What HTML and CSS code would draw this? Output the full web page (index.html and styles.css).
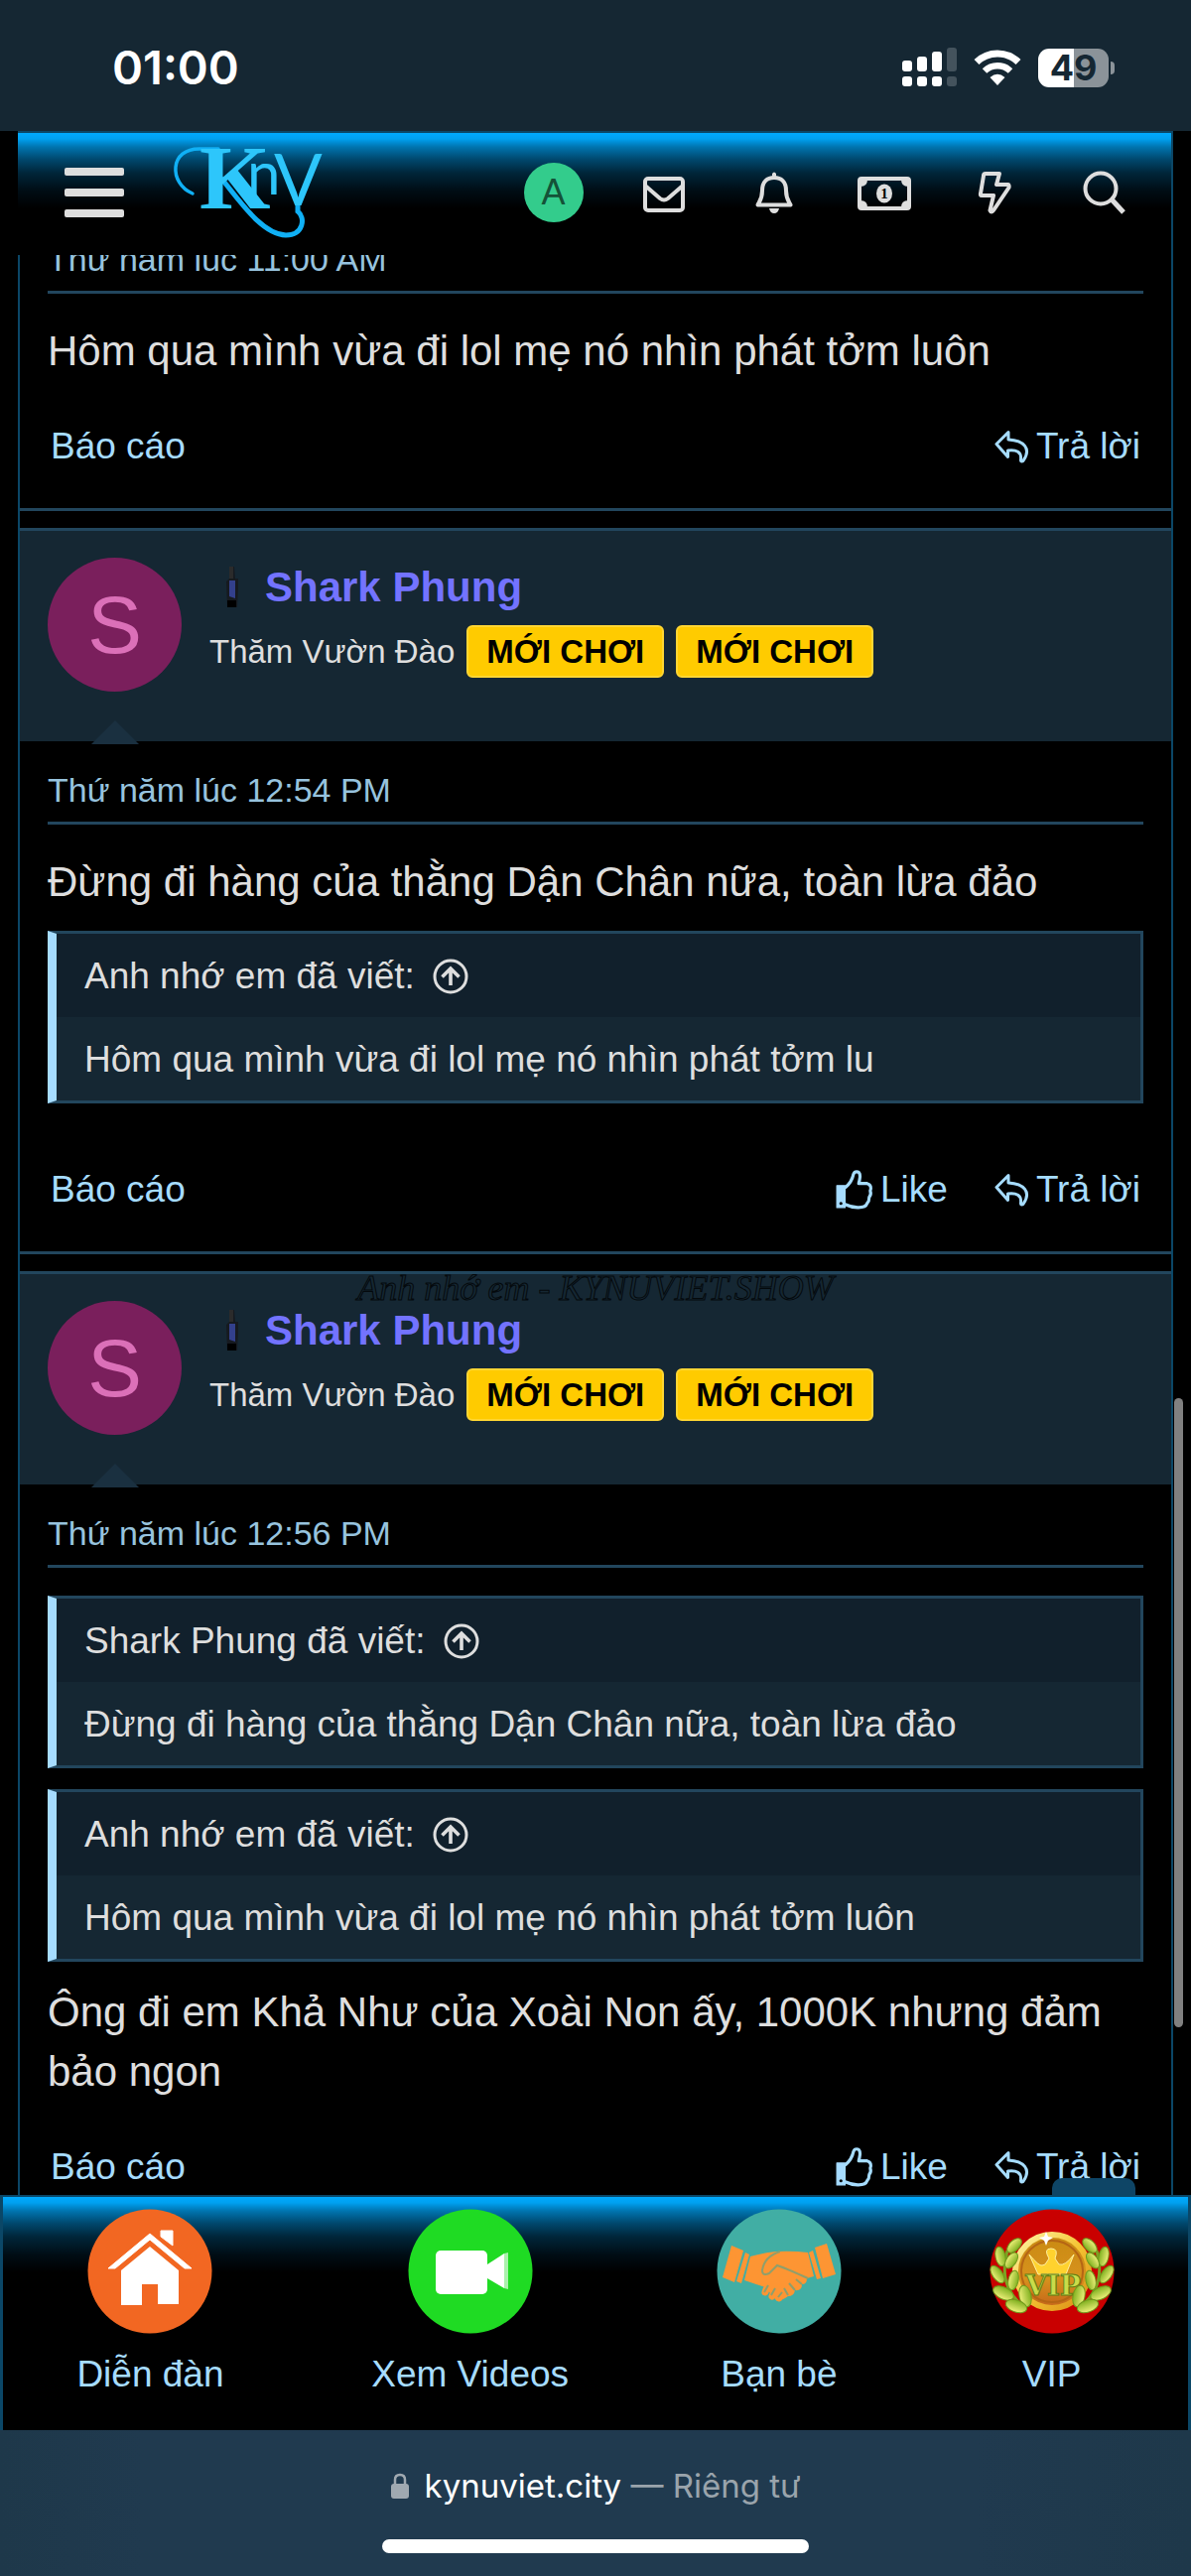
FILE: index.html
```
<!DOCTYPE html>
<html lang="vi">
<head>
  <meta charset="UTF-8">
  <meta name="viewport" content="width=device-width, initial-scale=1">
  <title>kynuviet.city</title>
  <link rel="stylesheet" href="styles.css">
</head>
<body>
  <!-- shared icons -->
  <svg class="sprite" aria-hidden="true">
    <symbol id="i-reply" viewBox="0 0 36 36">
      <path d="M15 3.5 L3 15.500 L14.500 28.500 V22 C23 21 28.500 23 27.500 31.500 C27.500 33.500 29.500 33.500 30.500 31.500 C38 20 31 12 15 11 Z" fill="none" stroke="currentColor" stroke-width="3" stroke-linejoin="round"/>
    </symbol>
    <symbol id="i-like" viewBox="0 0 36 38">
      <path d="M1 15 h8 v21 h-8 z" fill="currentColor" stroke="currentColor" stroke-width="1" stroke-linejoin="round"/>
      <circle cx="5" cy="32" r="1.500" fill="#000"/>
      <path d="M9 17 C14 13 16 9 17 4 C18 1 22 1 23 4 C24 8 22.500 10 22 13 L30 13 C34 14 34 18 33 20 C34 23 33 25 32 26 C32 29 31 31 30 32 C28 38 15 36 9 33" fill="none" stroke="currentColor" stroke-width="3" stroke-linejoin="round"/>
    </symbol>
    <symbol id="i-up" viewBox="0 0 36 36">
      <circle cx="18" cy="18" r="16" fill="none" stroke="currentColor" stroke-width="3"/>
      <path d="M18 27 V11 M9.500 18.500 L18 10 L26.500 18.500" fill="none" stroke="currentColor" stroke-width="3.600"/>
    </symbol>
    <symbol id="i-bottle" viewBox="0 0 48 44">
      <path d="M20 1 h5 l1 12 h3 v10 l-1 19 h-10 l-1 -26 l3 -3 z" fill="#161a20"/>
      <path d="M20 1 h4 v12 h-4 z" fill="#2b2b2b"/>
      <path d="M20 15 h6 v18 l-6 -2 z" fill="#33408c"/>
      <path d="M18 35 h9 v7 h-9 z" fill="#000"/>
    </symbol>
  </svg>

  <div class="status">
    <time class="clock">01:00</time>
    <div class="status-icons">
      <svg width="55" height="40" viewBox="0 0 55 40" fill="#fff">
        <rect x="0" y="13" width="10" height="11" rx="3"/><rect x="0" y="29" width="10" height="10" rx="3"/>
        <rect x="15" y="9" width="10" height="15" rx="3"/><rect x="15" y="29" width="10" height="10" rx="3"/>
        <rect x="30" y="4" width="10" height="20" rx="3"/><rect x="30" y="29" width="10" height="10" rx="3"/>
        <g fill="#44535d"><rect x="45" y="0" width="10" height="24" rx="3"/><rect x="45" y="29" width="10" height="10" rx="3"/></g>
      </svg>
      <svg width="48" height="36" viewBox="0 0 48 36">
        <path d="M3 12.500 A30 30 0 0 1 45 12.500" fill="none" stroke="#fff" stroke-width="7"/>
        <path d="M11 21.500 A19 19 0 0 1 37 21.500" fill="none" stroke="#fff" stroke-width="6.500"/>
        <path d="M16.500 28 Q24 21.500 31.500 28 L24 36 Z" fill="#fff"/>
      </svg>
      <div class="battery"><span>49</span></div>
    </div>
  </div>

  <header class="nav">
    <button class="menu" aria-label="Menu"><i></i><i></i><i></i></button>
    <a class="logo" href="#" aria-label="KnY">
      <svg width="152" height="94" viewBox="0 0 152 94" fill="#2dc6fb">
        <g fill="none" stroke="#10b0f5" stroke-width="3.500" stroke-linecap="round">
          <path d="M20 48 C-4 38 -4 2 28 3 H46"/>
          <path d="M50 34 C68 56 90 89 114 90 C132 90 134 72 126 66 V60" stroke-width="5"/>
        </g>
        <text class="logo-k" x="27" y="63">K</text>
        <text class="logo-n" x="75" y="49">n</text>
        <text class="logo-v" x="102" y="60">V</text>
      </svg>
    </a>
    <nav class="nav-icons">
      <a href="#" aria-label="Tài khoản"><span class="me">A</span></a>
      <a href="#" aria-label="Hộp thư">
        <svg width="44" height="44" viewBox="0 0 44 44" fill="none" stroke="currentColor" stroke-width="4" stroke-linejoin="round">
          <rect x="3" y="8" width="38" height="32" rx="3"/>
          <path d="M3 15 L18 28 Q22 31 26 28 L41 15"/>
        </svg>
      </a>
      <a href="#" aria-label="Thông báo">
        <svg width="44" height="44" viewBox="0 0 44 44">
          <path d="M5.500 34.500 C8 30 10 28 10 20 C10 11 15 7 22 7 C29 7 34 11 34 20 C34 28 36 30 38.500 34.500 Z" fill="none" stroke="currentColor" stroke-width="4" stroke-linejoin="round"/>
          <path d="M20 7 V3 Q22 0 24 3 V7 Z M17 38 H27 Q26 43 22 43 Q18 43 17 38" fill="currentColor"/>
        </svg>
      </a>
      <a href="#" aria-label="Tiền">
        <svg width="54" height="44" viewBox="0 0 54 44">
          <rect x="2" y="8" width="50" height="30" rx="2" fill="none" stroke="currentColor" stroke-width="4"/>
          <path d="M3 9 h7 q0 7 -7 7 z M51 9 h-7 q0 7 7 7 z M3 37 h7 q0 -7 -7 -7 z M51 37 h-7 q0 -7 7 -7 z" fill="currentColor"/>
          <ellipse cx="27" cy="23" rx="8" ry="9.500" fill="currentColor"/>
          <text class="bill" x="27" y="28" text-anchor="middle">1</text>
        </svg>
      </a>
      <a href="#" aria-label="Mới">
        <svg width="34" height="44" viewBox="0 0 34 44" fill="none" stroke="currentColor" stroke-width="4" stroke-linejoin="round">
          <path d="M8 3 H22 L19 14 H31 Q32 15 31.500 17 L16 40 Q14 43 12.500 40 L16 25 H4 Q2.500 25 3 23 L6 5 Q6 3 8 3 Z"/>
        </svg>
      </a>
      <a href="#" aria-label="Tìm kiếm">
        <svg width="44" height="44" viewBox="0 0 44 44" fill="none" stroke="currentColor" stroke-width="4">
          <circle cx="18" cy="18" r="15.500"/>
          <path d="M29 29 L41 42" stroke-width="5"/>
        </svg>
      </a>
    </nav>
  </header>

  <main class="thread">
    <article class="post post-first">
      <div class="content">
        <a class="date" href="#">Thứ năm lúc 11:00 AM</a>
        <div class="text">
          <p>Hôm qua mình vừa đi lol mẹ nó nhìn phát tởm luôn</p>
        </div>
        <footer class="actions">
          <a href="#">Báo cáo</a>
          <div class="right">
            <a href="#"><svg class="ic"><use href="#i-reply"/></svg>Trả lời</a>
          </div>
        </footer>
      </div>
    </article>

    <article class="post">
      <header class="user">
        <a class="avatar" href="#">S</a>
        <div>
          <a class="name" href="#"><svg class="bottle"><use href="#i-bottle"/></svg>Shark Phung</a>
          <div class="title">Thăm Vườn Đào <span class="badge">MỚI CHƠI</span><span class="badge">MỚI CHƠI</span></div>
        </div>
      </header>
      <div class="content">
        <a class="date" href="#">Thứ năm lúc 12:54 PM</a>
        <div class="text">
          <p>Đừng đi hàng của thằng Dận Chân nữa, toàn lừa đảo</p>
          <blockquote>
            <a class="who" href="#">Anh nhớ em đã viết: <svg class="up"><use href="#i-up"/></svg></a>
            <p class="quoted">Hôm qua mình vừa đi lol mẹ nó nhìn phát tởm lu</p>
          </blockquote>
        </div>
        <footer class="actions">
          <a href="#">Báo cáo</a>
          <div class="right">
            <a href="#"><svg class="ic like"><use href="#i-like"/></svg>Like</a>
            <a href="#"><svg class="ic"><use href="#i-reply"/></svg>Trả lời</a>
          </div>
        </footer>
      </div>
    </article>

    <article class="post">
      <span class="watermark">Anh nhớ em - KYNUVIET.SHOW</span>
      <header class="user">
        <a class="avatar" href="#">S</a>
        <div>
          <a class="name" href="#"><svg class="bottle"><use href="#i-bottle"/></svg>Shark Phung</a>
          <div class="title">Thăm Vườn Đào <span class="badge">MỚI CHƠI</span><span class="badge">MỚI CHƠI</span></div>
        </div>
      </header>
      <div class="content">
        <a class="date" href="#">Thứ năm lúc 12:56 PM</a>
        <div class="text">
          <blockquote>
            <a class="who" href="#">Shark Phung đã viết: <svg class="up"><use href="#i-up"/></svg></a>
            <p class="quoted">Đừng đi hàng của thằng Dận Chân nữa, toàn lừa đảo</p>
          </blockquote>
          <blockquote>
            <a class="who" href="#">Anh nhớ em đã viết: <svg class="up"><use href="#i-up"/></svg></a>
            <p class="quoted">Hôm qua mình vừa đi lol mẹ nó nhìn phát tởm luôn</p>
          </blockquote>
          <p>Ông đi em Khả Như của Xoài Non ấy, 1000K nhưng đảm bảo ngon</p>
        </div>
        <footer class="actions">
          <a href="#">Báo cáo</a>
          <div class="right">
            <a href="#"><svg class="ic like"><use href="#i-like"/></svg>Like</a>
            <a href="#"><svg class="ic"><use href="#i-reply"/></svg>Trả lời</a>
          </div>
        </footer>
      </div>
    </article>

    <span class="scrollbar"></span>
    <button class="to-top" aria-label="Lên đầu trang"></button>
  </main>

  <nav class="tabs">
    <a href="#">
      <svg width="126" height="126" viewBox="0 0 126 126">
        <circle cx="63" cy="63" r="62.500" fill="#f26722"/>
        <path d="M21 60 L63 25 L105 60 L98 60 L63 31 L28 60 Z M74 22 h12 v15 l-12 -9 z" fill="#fff" stroke="#fff" stroke-width="1"/>
        <path d="M34 62 L63 38 L92 62 V96 H71 V76 H55 V97 H34 Z" fill="#fff"/>
      </svg>
      Diễn đàn
    </a>
    <a href="#">
      <svg width="126" height="126" viewBox="0 0 126 126">
        <circle cx="63" cy="63" r="62.500" fill="#1fdb23"/>
        <rect x="28" y="42" width="52" height="44" rx="5" fill="#fff"/>
        <path d="M80 56 L97 45 V80 L80 70 Z" fill="#fff"/>
        <path d="M97 45 l4 -1 v37 l-4 -1 z" fill="#a9f1ab"/>
      </svg>
      Xem Videos
    </a>
    <a href="#">
      <svg width="126" height="126" viewBox="0 0 126 126">
        <circle cx="63" cy="63" r="62.500" fill="#41aea4"/>
        <g fill="#fd9533">
          <path d="M15 37 L27 42 L18 74 L6 69 Z M111 35 L99 39 L107 70 L120 66 Z"/>
          <path d="M29 44 L33 46 L25 75 L20 73 Z M97 42 L93 44 L101 71 L105 70 Z"/>
          <path d="M34 48 Q48 44 60 43 Q76 42 92 44 L98 68 L91 70 Q91 76 86 76 Q86 83 79 82 Q78 88 72 88 Q66 93 60 92 L49 79 L28 72 Z"/>
          <g stroke="#fd9533" stroke-width="7" stroke-linecap="round"><path d="M49 84 l1 -3 M56 88 l2 -4 M63 90 l1 -3"/></g>
        </g>
        <path d="M64 43 Q48 48 46 62 Q46 68 53 65 L61 57 Q70 60 92 70 M52 77 L48 84 M59 80 L55 87 M66 84 L62 89 M80 71 L86 76 M73 75 L79 82 M68 80 L72 87" fill="none" stroke="#8f9f6c" stroke-width="2"/>
      </svg>
      Bạn bè
    </a>
    <a href="#">
      <svg width="126" height="126" viewBox="0 0 126 126">
        <defs>
          <linearGradient id="gold" x1="0" y1="0" x2="1" y2="1">
            <stop offset="0" stop-color="#fff6a8"/><stop offset="0.500" stop-color="#f5c534"/><stop offset="1" stop-color="#d98a14"/>
          </linearGradient>
          <linearGradient id="coin" x1="0" y1="0" x2="0" y2="1">
            <stop offset="0" stop-color="#c98a12"/><stop offset="0.600" stop-color="#d7921d"/><stop offset="1" stop-color="#c4641a"/>
          </linearGradient>
          <linearGradient id="leaf" x1="0" y1="0" x2="1" y2="0">
            <stop offset="0" stop-color="#eef07a"/><stop offset="1" stop-color="#7fb01f"/>
          </linearGradient>
          <g id="leaves">
            <path d="M18 42 Q8 78 34 98" fill="none" stroke="#7da222" stroke-width="3"/>
            <g fill="url(#leaf)" stroke="#6f9a1c" stroke-width="1">
              <ellipse cx="25" cy="37" rx="5" ry="9" transform="rotate(45 25 37)"/>
              <ellipse cx="11" cy="48" rx="5" ry="10" transform="rotate(-12 11 48)"/>
              <ellipse cx="22" cy="52" rx="5" ry="9" transform="rotate(35 22 52)"/>
              <ellipse cx="8" cy="66" rx="5" ry="10" transform="rotate(-35 8 66)"/>
              <ellipse cx="24" cy="72" rx="5" ry="10" transform="rotate(12 24 72)"/>
              <ellipse cx="14" cy="85" rx="6" ry="11" transform="rotate(-65 14 85)"/>
              <ellipse cx="36" cy="88" rx="6" ry="11" transform="rotate(-12 36 88)"/>
              <ellipse cx="27" cy="98" rx="6" ry="11" transform="rotate(-72 27 98)"/>
            </g>
          </g>
        </defs>
        <circle cx="63" cy="63" r="62.500" fill="#c90000"/>
        <circle cx="63" cy="63" r="37" fill="url(#coin)" stroke="url(#gold)" stroke-width="6"/>
        <circle cx="63" cy="63" r="31" fill="none" stroke="#b56514" stroke-width="2"/>
        <path d="M40 46 Q50 58 53 57 L56 56 L60 50 Q54 40 62 40 Q70 40 66 50 L70 56 Q76 58 85 46 L77 66 H49 Z" fill="#ffd22e" stroke="#fff0a0" stroke-width="1"/>
        <use href="#leaves"/>
        <use href="#leaves" transform="translate(126 0) scale(-1 1)"/>
        <text class="vip" x="64" y="87" text-anchor="middle">VIP</text>
        <path d="M57 23 L59 28 L64 29 L59 32 L57 37 L55 32 L50 29 L55 28 Z" fill="#fff"/>
      </svg>
      VIP
    </a>
  </nav>

  <footer class="browser">
    <div class="url">
      <svg width="18" height="26" viewBox="0 0 18 26">
        <path d="M4 12 V7 Q4 2 9 2 Q14 2 14 7 V12" fill="none" stroke="#a0a9b1" stroke-width="2.500"/>
        <rect x="0" y="11" width="18" height="15" rx="3" fill="#a0a9b1"/>
      </svg>
      <span>kynuviet.city <span class="private">— Riêng tư</span></span>
    </div>
    <div class="home-bar"></div>
  </footer>
</body>
</html>
```
FILE: styles.css
```
* {
  box-sizing: border-box;
}
body {
  margin: 0;
  height: 100vh;
  display: flex;
  flex-direction: column;
  background: #000;
  color: #dedede;
  font-family: "Liberation Sans", Arial, sans-serif;
  font-size: 37px;
  line-height: 52px;
}
a {
  color: #a6dcff;
  text-decoration: none;
}
p {
  margin: 0;
}
button {
  border: none;
  padding: 0;
  background: none;
}
svg {
  flex: none;
  overflow: visible;
}
.sprite {
  position: absolute;
  width: 0;
  height: 0;
}

/* status bar */
.status {
  flex: none;
  height: 132px;
  padding: 4px 83px 0 113px;
  display: flex;
  justify-content: space-between;
  align-items: center;
  background: #152733;
  color: #fff;
  font-family: Inter, sans-serif;
  font-weight: 600;
}
.clock {
  font-size: 47px;
}
.status-icons {
  display: flex;
  align-items: center;
  gap: 17px;
}
.battery {
  position: relative;
  width: 71px;
  height: 39px;
  border-radius: 11px;
  background: linear-gradient(90deg, #fff 50%, #8b9399 50%);
  color: #152733;
  font-size: 36px;
  font-weight: 700;
  line-height: 39px;
  text-align: center;
}
.battery::after {
  content: "";
  position: absolute;
  left: 73px;
  top: 13px;
  width: 4px;
  height: 13px;
  border-radius: 0 4px 4px 0;
  background: #8b9399;
}

/* top navigation */
.nav {
  flex: none;
  height: 125px;
  margin: 0 18px;
  padding: 0 12px 3px 47px;
  display: flex;
  align-items: center;
  border-top: 2px solid #0b4767;
  border-right: 2px solid #0b4767;
  background: linear-gradient(#00aaff 0, #00a0f0 6px, #0075b0 14px, #004a70 26px, #00263a 40px, #000d15 58px, #000 76px);
}
.menu {
  width: 60px;
  display: flex;
  flex-direction: column;
  gap: 13px;
}
.menu i {
  height: 8px;
  border-radius: 2px;
  background: #dedede;
}
.logo {
  margin-left: 49px;
  height: 94px;
}
.logo-k {
  font: bold 92px "Liberation Serif", serif;
}
.logo-n {
  font: 400 60px Lato, sans-serif;
}
.logo-v {
  font: 400 72px Lato, sans-serif;
}
.nav-icons {
  flex: none;
  margin-left: auto;
  display: flex;
}
.nav-icons a {
  width: 111px;
  display: flex;
  justify-content: center;
  align-items: center;
  color: #dedede;
}
.me {
  width: 60px;
  height: 60px;
  border-radius: 50%;
  background: #33cc8c;
  color: #145238;
  font-size: 36px;
  line-height: 60px;
  text-align: center;
}
.bill {
  font: bold 15px "Liberation Serif", serif;
  fill: #000;
}

/* thread */
.thread {
  position: relative;
  flex: 1;
  min-height: 0;
  margin: 0 18px;
  border: solid #0b4767;
  border-width: 0 2px;
  clip-path: inset(0 -18px);
}
.post {
  position: relative;
  margin-bottom: 17px;
  border: solid #22465d;
  border-width: 3px 0;
}
.post-first {
  margin-top: -45px;
  border-top: none;
}
.user {
  position: relative;
  height: 212px;
  padding: 27px 28px;
  display: flex;
  gap: 28px;
  background: #152733;
}
.user::after {
  content: "";
  position: absolute;
  left: 72px;
  bottom: -3px;
  border: 24px solid transparent;
  border-top: none;
  border-bottom-color: #1a3040;
}
.avatar {
  width: 135px;
  height: 135px;
  border-radius: 50%;
  background: #7a1f5c;
  color: #db70b8;
  font-size: 82px;
  line-height: 135px;
  text-align: center;
}
.name {
  display: flex;
  align-items: center;
  gap: 8px;
  color: #7373ff;
  font-size: 42px;
  font-weight: bold;
  line-height: 60px;
}
.bottle {
  width: 48px;
  height: 44px;
}
.title {
  margin-top: 8px;
  display: flex;
  align-items: center;
  gap: 12px;
  font-size: 33px;
}
.badge {
  padding: 0 18px;
  border: 2px solid #ffd633;
  border-radius: 6px;
  background: #ffcb00;
  color: #000;
  font-weight: bold;
  line-height: 49px;
}
.content {
  padding: 0 28px;
}
.date {
  display: block;
  padding: 25px 0 8px;
  border-bottom: 3px solid #22465d;
  color: #97c3de;
  font-size: 34px;
  line-height: 48px;
}
.text {
  padding-top: 28px;
  font-size: 42px;
  line-height: 60px;
}
blockquote {
  margin: 21px 0;
  border: 3px solid #22465d;
  border-left: 9px solid #a6dcff;
  background: #152733;
  font-size: 37px;
  line-height: 52px;
}
blockquote:first-child {
  margin-top: 0;
}
p + blockquote {
  margin-top: 19px;
}
.who,
.quoted {
  padding: 17px 28px 15px;
}
.who {
  display: flex;
  align-items: center;
  gap: 18px;
  background: #11202c;
  color: #dedede;
}
.up {
  width: 36px;
  height: 36px;
}
.actions {
  padding: 40px 3px 36px;
  display: flex;
  justify-content: space-between;
}
.right {
  display: flex;
  gap: 46px;
}
.right a {
  display: flex;
  align-items: center;
  gap: 7px;
}
.ic {
  width: 36px;
  height: 36px;
}
.like {
  width: 38px;
  height: 42px;
}
.watermark {
  position: absolute;
  z-index: 1;
  top: -8px;
  left: 50%;
  transform: translateX(-50%);
  color: transparent;
  -webkit-text-stroke: 1px #04090c;
  font: italic 36px/44px "Liberation Serif", serif;
  white-space: nowrap;
}
.scrollbar {
  position: absolute;
  top: 1152px;
  right: -12px;
  width: 9px;
  height: 634px;
  border-radius: 5px;
  background: #808080;
}
.to-top {
  position: absolute;
  right: 36px;
  bottom: 0;
  width: 84px;
  height: 17px;
  border-radius: 10px 10px 0 0;
  background: #0e4566;
}

/* bottom tabs */
.tabs {
  flex: none;
  height: 237px;
  padding-top: 12px;
  display: flex;
  justify-content: space-around;
  border: solid #0b4767;
  border-width: 2px 3px 0;
  background: linear-gradient(#00aaff 0, #00a0f0 6px, #0075b0 14px, #004a70 26px, #00263a 40px, #000d15 58px, #000 76px);
}
.tabs a {
  display: flex;
  flex-direction: column;
  align-items: center;
  gap: 15px;
}
.vip {
  font: bold 28px "DejaVu Serif", serif;
  fill: #c9dc4a;
  stroke: #5f7d14;
  stroke-width: 1px;
}

/* browser bar */
.browser {
  flex: none;
  height: 147px;
  padding-top: 30px;
  background: linear-gradient(90deg, #1e384a, #203a4f 12%, #203a4f 82%, #1e384a);
  color: #fff;
  font-family: Inter, sans-serif;
  font-size: 33px;
}
.url {
  display: flex;
  justify-content: center;
  align-items: center;
  gap: 16px;
}
.private {
  color: #9aa4ac;
}
.home-bar {
  width: 430px;
  height: 14px;
  margin: 28px auto 0;
  border-radius: 7px;
  background: #fff;
}
```
